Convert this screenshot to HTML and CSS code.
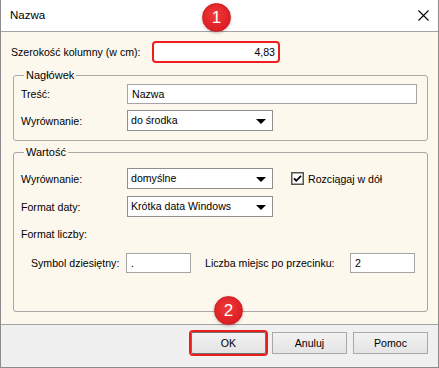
FILE: index.html
```html
<!DOCTYPE html>
<html lang="pl">
<head>
<meta charset="utf-8">
<title>Nazwa</title>
<link rel="stylesheet" href="styles.css">
</head>
<body>
<div class="window">
  <div class="titlebar">
    <span class="title">Nazwa</span>
    <svg class="close" width="11" height="11" viewBox="0 0 11 11"><path d="M0.5 0.5 L10.5 10.5 M10.5 0.5 L0.5 10.5" stroke="#000" stroke-width="1.1" fill="none"/></svg>
  </div>
  <div class="content">
    <div class="row-width">
      <span class="lbl-width">Szerokość kolumny (w cm):</span>
      <div class="hl-box"><div class="field field-width">4,83</div></div>
    </div>

    <div class="group group-head">
      <span class="legend">Nagłówek</span>
      <div class="row row-first-h">
        <span class="lbl">Treść:</span>
        <div class="field field-long">Nazwa</div>
      </div>
      <div class="row row-gap6">
        <span class="lbl">Wyrównanie:</span>
        <div class="select">do środka<span class="arrow"></span></div>
      </div>
    </div>

    <div class="group group-value">
      <span class="legend">Wartość</span>
      <div class="row row-first-v">
        <span class="lbl">Wyrównanie:</span>
        <div class="select">domyślne<span class="arrow"></span></div>
        <span class="check">
          <svg width="13" height="13" viewBox="0 0 13 13"><rect x="0.75" y="0.75" width="11.5" height="11.5" fill="#fff" stroke="#555" stroke-width="1.5"/><path d="M3 6.3 L5.3 8.8 L10 3.8" stroke="#000" stroke-width="1.8" fill="none"/></svg>
          <span>Rozciągaj w dół</span>
        </span>
      </div>
      <div class="row row-gap7">
        <span class="lbl">Format daty:</span>
        <div class="select">Krótka data Windows<span class="arrow"></span></div>
      </div>
      <div class="row-label">Format liczby:</div>
      <div class="row row-num">
        <span class="lbl-sym">Symbol dziesiętny:</span>
        <div class="field field-short">.</div>
        <span class="lbl-dec">Liczba miejsc po przecinku:</span>
        <div class="field field-short">2</div>
      </div>
    </div>
  </div>
  <div class="footer">
    <button class="btn btn-ok">OK</button>
    <button class="btn">Anuluj</button>
    <button class="btn">Pomoc</button>
  </div>
  <div class="badge badge-1">1</div>
  <div class="badge badge-2">2</div>
</div>
</body>
</html>
```

FILE: styles.css
```css
* { box-sizing: border-box; }
html, body { margin: 0; padding: 0; background: #fff; }
body {
  font-family: "Liberation Sans", Arial, sans-serif;
  font-size: 10.6px;
  color: #000;
}
.window {
  position: relative;
  width: 439px;
  height: 368px;
  border: 1px solid #8c8c8c;
  border-top: none;
  display: flex;
  flex-direction: column;
  background: #fff;
}
.titlebar {
  height: 32px;
  flex: 0 0 32px;
  border-bottom: 1px solid #a3a3a3;
  display: flex;
  align-items: center;
  justify-content: space-between;
  padding: 0 8px 1px 9px;
  background: #fff;
}
.title { font-size: 11.5px; }
.close { margin-right: 1px; }
.content {
  flex: 1;
  background: #fdf8ed;
  padding-top: 9px;
  display: flex;
  flex-direction: column;
}
.row-width {
  display: flex;
  align-items: center;
  height: 22px;
  padding-left: 10px;
}
.lbl-width { width: 141px; }
.hl-box {
  width: 128px;
  height: 22px;
  border: 2px solid #ee1d1d;
  border-radius: 4px;
  background: #fff;
  padding: 1px;
}
.field {
  background: #fff;
  border: 1px solid #a5a5a5;
  height: 20px;
  line-height: 18px;
  padding: 0 4px;
  white-space: nowrap;
}
.field-width {
  border: none;
  height: 16px;
  line-height: 16px;
  text-align: right;
  padding-right: 2px;
}
.field-long { width: 290px; }
.field-short { width: 65px; }
.group {
  margin: 0 10px 0 12px;
  border: 1px solid #a8a8a8;
  border-radius: 3px;
  padding: 0 7px;
  display: flex;
  flex-direction: column;
}
.group-head { margin-top: 12px; padding-bottom: 9px; }
.group-value { margin-top: 11px; padding-bottom: 38px; }
.legend {
  align-self: flex-start;
  margin: -7px 0 0 3px;
  padding: 0 2px;
  height: 13px;
  line-height: 13px;
  background: #fdf8ed;
  font-size: 11px;
}
.row {
  display: flex;
  align-items: center;
}
.row-first-h { margin-top: 2px; height: 20px; }
.row-gap6 { margin-top: 6px; height: 21px; }
.row-first-v { margin-top: 9px; height: 21px; }
.row-gap7 { margin-top: 7px; height: 21px; }
.lbl { width: 106px; }
.select {
  position: relative;
  width: 146px;
  height: 21px;
  line-height: 19px;
  border: 1px solid #8f8f8f;
  background: #fff;
  padding-left: 3px;
}
.arrow {
  position: absolute;
  right: 6px;
  top: 8px;
  width: 0;
  height: 0;
  border-left: 5px solid transparent;
  border-right: 5px solid transparent;
  border-top: 5px solid #000;
}
.check {
  display: flex;
  align-items: center;
  margin-left: 18px;
  gap: 4px;
}
.row-label {
  margin-top: 9px;
  height: 16px;
  line-height: 16px;
}
.row-num { margin-top: 11px; height: 20px; padding-left: 10px; }
.lbl-sym { width: 95px; }
.lbl-dec { width: 145px; margin-left: 14px; }
.footer {
  flex: 0 0 43px;
  border-top: 1px solid #a3a3a3;
  background: #f0f0f0;
  display: flex;
  justify-content: flex-end;
  align-items: flex-start;
  gap: 6px;
  padding: 7px 10px 0 0;
}
.btn {
  width: 75px;
  height: 22px;
  font-family: "Liberation Sans", Arial, sans-serif;
  font-size: 10.6px;
  color: #000;
  background: linear-gradient(#f2f2f2, #e4e4e4);
  border: 1px solid #a8a8a8;
  border-radius: 0;
  padding: 0;
}
.btn-ok {
  border-color: #707070;
  outline: 2px solid #ee1d1d;
  outline-offset: 0;
  border-radius: 2px;
}
.badge {
  position: absolute;
  width: 29px;
  height: 29px;
  border-radius: 50%;
  background: radial-gradient(circle at 45% 40%, #f03a3a, #dc1f24 70%);
  border: 1px solid #c91a1f;
  box-shadow: 0 1px 3px rgba(0,0,0,0.25);
  color: #fff;
  font-size: 17px;
  line-height: 27px;
  text-align: center;
}
.badge-1 { left: 201px; top: 3px; }
.badge-2 { left: 213px; top: 296px; }
```
